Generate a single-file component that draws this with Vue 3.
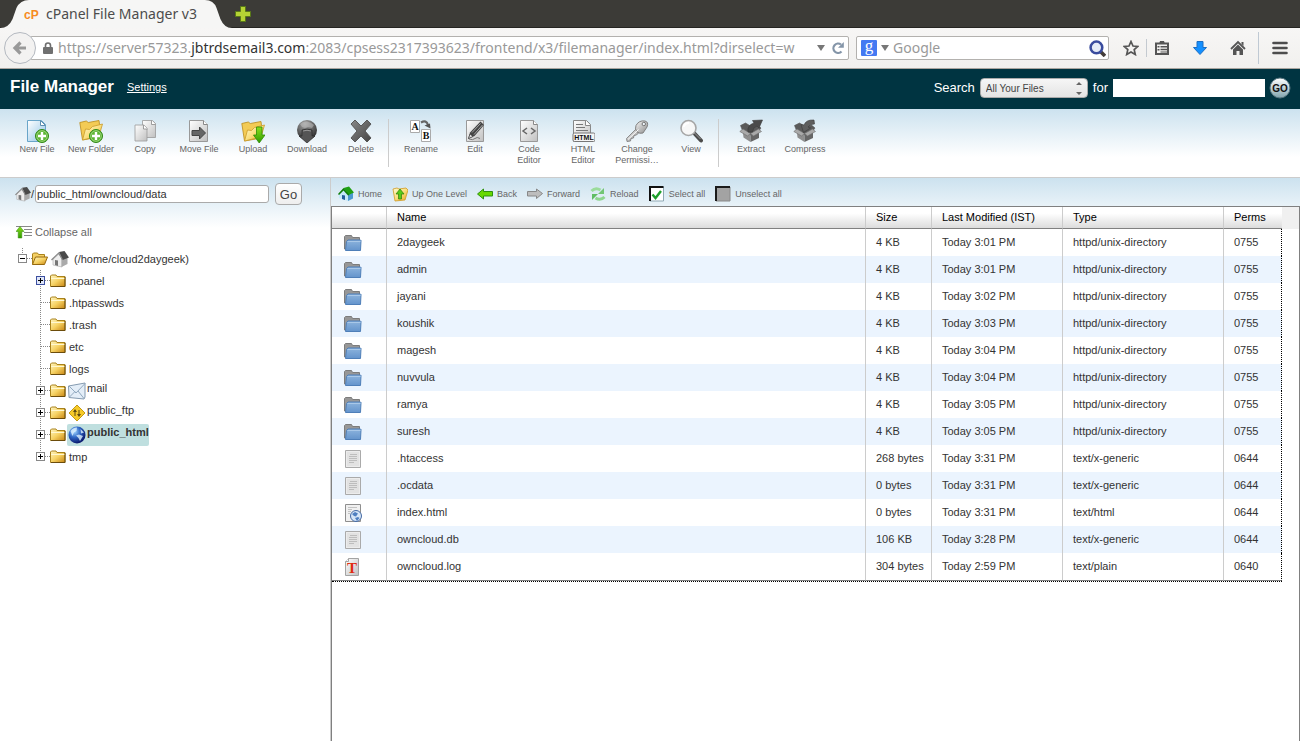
<script setup>
import { ref } from 'vue'

const address = ref('public_html/owncloud/data')
const scope = ref('All Your Files')
const query = ref('')
const webQuery = ref('')

const toolGroups = [
  [
    { icon: 'new-file', label: 'New File' },
    { icon: 'new-folder', label: 'New Folder' },
    { icon: 'copy', label: 'Copy' },
    { icon: 'move', label: 'Move File' },
    { icon: 'upload', label: 'Upload' },
    { icon: 'download', label: 'Download' },
    { icon: 'delete', label: 'Delete' }
  ],
  [
    {
      icon: 'rename',
      label: 'Rename',
      letters: [
        { text: 'A', x: 6, y: 11, kind: 'serif-glyph' },
        { text: 'B', x: 17, y: 20, kind: 'serif-glyph' }
      ]
    },
    { icon: 'edit', label: 'Edit' },
    { icon: 'code', label: 'Code\nEditor' },
    { icon: 'html', label: 'HTML\nEditor', letters: [{ text: 'HTML', x: 13, y: 21, kind: 'tag-glyph' }] },
    { icon: 'key', label: 'Change\nPermissi…' },
    { icon: 'view', label: 'View' }
  ],
  [
    { icon: 'extract', label: 'Extract' },
    { icon: 'compress', label: 'Compress' }
  ]
]

const actions = [
  { icon: 'home-green', label: 'Home' },
  { icon: 'up', label: 'Up One Level' },
  { icon: 'back', label: 'Back' },
  { icon: 'forward', label: 'Forward' },
  { icon: 'reload', label: 'Reload' },
  { icon: 'select', label: 'Select all' },
  { icon: 'unselect', label: 'Unselect all' }
]

const tree = [
  { name: '.cpanel', open: true, hot: true },
  { name: '.htpasswds' },
  { name: '.trash' },
  { name: 'etc' },
  { name: 'logs' },
  { name: 'mail', open: true, icon: 'mail' },
  { name: 'public_ftp', open: true, icon: 'ftp' },
  { name: 'public_html', open: true, icon: 'globe', selected: true },
  { name: 'tmp', open: true }
]

const dir = (name, time) => ({ icon: 'dir', name, size: '4 KB', time, type: 'httpd/unix-directory', perms: '0755' })
const files = [
  dir('2daygeek', 'Today 3:01 PM'),
  dir('admin', 'Today 3:01 PM'),
  dir('jayani', 'Today 3:02 PM'),
  dir('koushik', 'Today 3:03 PM'),
  dir('magesh', 'Today 3:04 PM'),
  dir('nuvvula', 'Today 3:04 PM'),
  dir('ramya', 'Today 3:05 PM'),
  dir('suresh', 'Today 3:05 PM'),
  { icon: 'text', name: '.htaccess', size: '268 bytes', time: 'Today 3:31 PM', type: 'text/x-generic', perms: '0644' },
  { icon: 'text', name: '.ocdata', size: '0 bytes', time: 'Today 3:31 PM', type: 'text/x-generic', perms: '0644' },
  { icon: 'web', name: 'index.html', size: '0 bytes', time: 'Today 3:31 PM', type: 'text/html', perms: '0644' },
  { icon: 'text', name: 'owncloud.db', size: '106 KB', time: 'Today 3:28 PM', type: 'text/x-generic', perms: '0644' },
  { icon: 'plain', letter: 'T', name: 'owncloud.log', size: '304 bytes', time: 'Today 2:59 PM', type: 'text/plain', perms: '0640' }
]
</script>

<template>
  <div class="window">
    <svg class="defs" aria-hidden="true">
      <defs>
        <linearGradient id="g-blue" x2="1" y2="1"><stop stop-color="#fff" /><stop offset="1" stop-color="#8fc3e6" /></linearGradient>
        <linearGradient id="g-page" x2="1" y2="1"><stop stop-color="#fff" /><stop offset="1" stop-color="#c0c0c0" /></linearGradient>
        <linearGradient id="g-gold" x2="1" y2="1"><stop stop-color="#fffbd5" /><stop offset=".5" stop-color="#fadf7e" /><stop offset="1" stop-color="#e3a41e" /></linearGradient>
        <linearGradient id="g-tree" x2="1" y2="1"><stop stop-color="#fff6c4" /><stop offset=".5" stop-color="#f6d263" /><stop offset="1" stop-color="#c88512" /></linearGradient>
        <linearGradient id="g-green" x2="0" y2="1"><stop stop-color="#8be01c" /><stop offset="1" stop-color="#2f9a00" /></linearGradient>
        <linearGradient id="g-dir" x2="0" y2="1"><stop stop-color="#8db4dd" /><stop offset="1" stop-color="#6494cc" /></linearGradient>
        <linearGradient id="g-dark" x2="1" y2="1"><stop stop-color="#888" /><stop offset="1" stop-color="#444" /></linearGradient>
        <linearGradient id="g-key" x2="1" y2="1"><stop stop-color="#f5f5f5" /><stop offset="1" stop-color="#8c8c8c" /></linearGradient>
        <radialGradient id="g-ball" cx=".4" cy=".2" r=".8"><stop stop-color="#a5a5a5" /><stop offset="1" stop-color="#2c2c2c" /></radialGradient>
        <radialGradient id="g-globe" cx=".35" cy=".3" r=".7"><stop stop-color="#9fd4ff" /><stop offset=".5" stop-color="#2e66c4" /><stop offset="1" stop-color="#0a1a70" /></radialGradient>
        <linearGradient id="g-go" x2="0" y2="1"><stop stop-color="#fff" /><stop offset="1" stop-color="#7fa3ad" /></linearGradient>
      </defs>

      <symbol id="i-new-file" viewBox="0 0 24 24">
        <path d="M2.500 1.500h14l4 4v17h-18z" fill="url(#g-blue)" stroke="#69a5c9" /><path d="M15.500 1.500v5h5z" fill="#fff" stroke="#5f8fb0" />
        <circle cx="17" cy="17" r="6.500" fill="#5cb533" stroke="#2f8714" /><circle cx="17" cy="17" r="5.300" fill="none" stroke="#b4e29b" stroke-width=".7" /><path d="M17 13v8M13 17h8" stroke="#fff" stroke-width="2.400" />
      </symbol>
      <symbol id="i-new-folder" viewBox="0 0 24 24">
        <path d="M.8 3.500l6.500-1.500 2 1.500L20 1.500l.5 4-3 13L3.500 21z" fill="#f3cb55" stroke="#b98a1a" stroke-width=".8" /><path d="M3.500 21l3-11 4 .5 3-3L23.500 5 20 17z" fill="url(#g-gold)" stroke="#c99a28" stroke-width=".8" />
        <circle cx="17" cy="17" r="6.500" fill="#5cb533" stroke="#2f8714" /><circle cx="17" cy="17" r="5.300" fill="none" stroke="#b4e29b" stroke-width=".7" /><path d="M17 13v8M13 17h8" stroke="#fff" stroke-width="2.400" />
      </symbol>
      <symbol id="i-copy" viewBox="0 0 24 24">
        <path d="M9.500 1.500h10l3 3v14h-13z" fill="url(#g-page)" stroke="#999" stroke-width=".8" /><path d="M18.500 1.500v4h4" fill="#fff" stroke="#888" stroke-width=".8" />
        <path d="M2 6h9l3 3v13H2z" fill="url(#g-page)" stroke="#999" stroke-width=".8" /><path d="M10.500 6v4h4" fill="#fff" stroke="#888" stroke-width=".8" />
      </symbol>
      <symbol id="i-move" viewBox="0 0 24 24">
        <path d="M2.500 1.500h14l4 4v17h-18z" fill="url(#g-page)" stroke="#999" /><path d="M16.500 1.500v4h4" fill="#fff" stroke="#888" />
        <path d="M5 11.500h7.500V8l6 6-6 6v-3.500H5z" fill="#666" stroke="#444" />
      </symbol>
      <symbol id="i-upload" viewBox="0 0 24 24">
        <path d="M.8 4.500l6.500-1.500 2 1.500L20 2.500l.5 4-3 13L3.500 22z" fill="#f3cb55" stroke="#b98a1a" stroke-width=".8" /><path d="M3.500 22l3-11 4 .5 3-3L23.500 6 20 18z" fill="url(#g-gold)" stroke="#c99a28" stroke-width=".8" />
        <path d="M15.500 8h5.500v8h3l-5.800 8-5.700-8h3z" fill="url(#g-green)" stroke="#2a8b06" stroke-width=".8" />
      </symbol>
      <symbol id="i-download" viewBox="0 0 24 24">
        <circle cx="12" cy="11" r="10" fill="url(#g-ball)" /><path d="M5 5q3-3 7-2.500T19 6l-2 3-4-1-3 1-3-1z" fill="#c4c4c4" opacity=".5" /><path d="M7 11q5-2 10 0v6h3l-8 7-8-7h3z" fill="#555" stroke="#2a2a2a" stroke-width=".7" /><path d="M8 12q4-1.500 8 0" fill="none" stroke="#999" />
      </symbol>
      <symbol id="i-delete" viewBox="0 0 24 24">
        <path d="M2 5l4-4 6 6 6-6 4 4-6 7 6 7-4 4-6-6-6 6-4-4 6-7z" fill="url(#g-dark)" stroke="#585858" />
      </symbol>
      <symbol id="i-rename" viewBox="0 0 24 24">
        <path d="M1.500 1.500h9v12h-9zM12.500 10.500h9v12h-9z" fill="#fff" stroke="#aaa" />
        <path d="M12 3.500q5.500-3 7 2.500" fill="none" stroke="#666" stroke-width="2.200" /><path d="M15.500 6.500l5.500-2 .5 5z" fill="#555" />
      </symbol>
      <symbol id="i-edit" viewBox="0 0 24 24">
        <path d="M3.500 1.500h17v21h-17z" fill="url(#g-page)" stroke="#999" /><path d="M6 20q4 1.500 6-.5t5 0" stroke="#777" fill="none" />
        <path d="M5 20l2-6.500L17.500 2.500l3.500 3.500-9.500 11z" fill="#444" /><path d="M9 13.500l8.500-9M11 15.500l8.500-9.500" stroke="#a8a8a8" /><path d="M5.500 19.500l1.500-4.500 3 2.500z" fill="#ddd" stroke="#333" stroke-width=".6" />
      </symbol>
      <symbol id="i-code" viewBox="0 0 24 24">
        <path d="M3.500 1.500h13l4 4v17h-17z" fill="url(#g-page)" stroke="#999" /><path d="M16.500 1.500v4h4" fill="#fff" stroke="#888" />
        <path d="M10 9l-4 3 4 3M14 9l4 3-4 3" fill="none" stroke="#666" stroke-width="1.500" />
      </symbol>
      <symbol id="i-html" viewBox="0 0 24 24">
        <path d="M2.500 1.500h13l4 4v17h-17z" fill="url(#g-page)" stroke="#888" /><path d="M14.500 1.500v5h5" fill="#fff" stroke="#888" />
        <path d="M5 5.500h7M5 8.500h9M5 11.500h12" stroke="#777" /><rect x="2" y="14" width="22" height="8.500" rx="1.500" fill="#f5f5f5" stroke="#777" />
      </symbol>
      <symbol id="i-key" viewBox="0 0 24 24">
        <path d="M12 9L1.500 19.500l.5 3 3.500-.5.500-2.500 2.500-.5.500-2.500 2.500-.5 4-4z" fill="url(#g-key)" stroke="#777" stroke-width=".8" /><path d="M11 6.500Q14 1 20 2q4 1 2 6l-4 6q-3 1-6-1-2.500-3-1-6.500z" fill="url(#g-key)" stroke="#808080" /><circle cx="18.800" cy="5" r="1.700" fill="#eef5fa" stroke="#777" /><path d="M3 20.500l10.500-10" stroke="#fff" />
      </symbol>
      <symbol id="i-view" viewBox="0 0 24 24">
        <path d="M15 14l7 7.500" stroke="#4c4c4c" stroke-width="4" stroke-linecap="round" /><path d="M15.500 14l6 6" stroke="#999" /><circle cx="9.500" cy="9" r="7.500" fill="#f7f7f7" stroke="#a5a5a5" stroke-width="1.600" /><path d="M4.500 8q1.500-4 5.500-4" stroke="#fff" stroke-width="2" fill="none" />
      </symbol>
      <symbol id="i-box" viewBox="0 0 24 24">
        <path d="M1.500 6.500l5-2.500 5 3 7-1 3.500 3-3 4-7.500 3-8-4.500z" fill="#5a5a5a" stroke="#555" stroke-width=".6" />
        <path d="M3.500 11l8 4.500V23l-7-4.500z" fill="#8e8e8e" /><path d="M11.500 15.500l8.500-4v7.500l-8.500 4z" fill="#666" />
        <path d="M.8 12.500L4 10l7.500 4.500-3 2.500zM11.500 14.500L19.500 10l3 2.500-8 4.500z" fill="#a9a9a9" stroke="#6d6d6d" stroke-width=".6" />
      </symbol>
      <symbol id="i-extract" viewBox="0 0 24 24">
        <use href="#i-box" /><path d="M9 13q-1-7 6-9l-1.500-2.500L23.500 1l-3.500 8-2-2q-4 1-4.500 6z" fill="#4b4b4b" stroke="#3a3a3a" stroke-width=".6" />
      </symbol>
      <symbol id="i-compress" viewBox="0 0 24 24">
        <use href="#i-box" /><path d="M21 1q-8-.5-10 5L8 5.500l2.500 8 7-4.500-2.500-1q1.500-3 6.500-3z" fill="#5e5e5e" stroke="#3a3a3a" stroke-width=".6" />
      </symbol>

      <symbol id="i-home-green" viewBox="0 0 16 16">
        <path d="M1 8l4.500-4L10 8.500V15l-9-3z" fill="#c4e8f8" /><path d="M10 8.500l5-2v6L10 15z" fill="#4a9ad0" /><path d="M5.500 2L11 .5 16 6.500 10.500 9z" fill="#1fa012" /><path d="M0 8l5.500-6 6 7-1.500.5-4.500-5L1 9z" fill="#0d7c08" /><path d="M4 9l3 .5V14l-3-1z" fill="#225d98" />
      </symbol>
      <symbol id="i-up" viewBox="0 0 16 16">
        <path d="M1 3l4-1 2 1 7-1 2 2-3 10-10 1z" fill="url(#g-gold)" stroke="#d09b22" stroke-width=".8" /><path d="M8 3l4 5H9.500v5h-3V8H4z" fill="#58cc17" stroke="#2d7c07" stroke-width=".7" />
      </symbol>
      <symbol id="i-back" viewBox="0 0 16 16"><path d="M.5 8l6-5v2.500h9v4.500h-9v3z" fill="#67d900" stroke="#2e9110" /></symbol>
      <symbol id="i-forward" viewBox="0 0 16 16"><path d="M15.500 7.500L9.500 3v2.500h-9V10h9v2.500z" fill="#bdbdbd" stroke="#888" /></symbol>
      <symbol id="i-reload" viewBox="0 0 16 16">
        <path d="M1.500 5q4-4 9-1" fill="none" stroke="#9bdc9b" stroke-width="3" /><path d="M14 2v6H8z" fill="#72c674" /><path d="M14.500 11q-4 4-9 1" fill="none" stroke="#8ed68e" stroke-width="3" /><path d="M2 14V8h6z" fill="#5fbd63" />
      </symbol>
      <symbol id="i-select" viewBox="0 0 16 16"><path d="M1 1h13.500v14H1z" fill="#fff" stroke="#8fa9b5" /><path d="M1 15V1h13.500" fill="none" stroke="#111" stroke-width="2" /><path d="M3.500 8.500l3 3.500L12 5" fill="none" stroke="#1fa02c" stroke-width="2.400" /></symbol>
      <symbol id="i-unselect" viewBox="0 0 16 16"><path d="M1 1h14v14H1z" fill="#a3a3a3" stroke="#888" /><path d="M1 15V1h14" fill="none" stroke="#1b1b1b" stroke-width="2" /></symbol>

      <symbol id="i-house" viewBox="0 0 18 18">
        <path d="M2 9l6-5 3 5v8l-9-2z" fill="#eee" stroke="#aaa" stroke-width=".6" /><path d="M10.500 9l6-2v7l-6 3z" fill="#aaa" /><path d="M8 2l5.500-1L18 7.500 11.500 10z" fill="#4a4a4a" /><path d="M0 9.500L8 2l4 7.500-1 .5-3.500-6L1 10.500z" fill="#8a8a8a" /><path d="M4 10l3 .5V16l-3-1z" fill="#777" />
      </symbol>
      <symbol id="i-folder" viewBox="0 0 16 16">
        <path d="M.5 13.500V3l1-1h4.500l1 1.500h8v10z" fill="url(#g-tree)" stroke="#a9821c" /><path d="M1 5.500h14" stroke="#fff8d0" /><path d="M15 4v9.500H1" fill="none" stroke="#6b4c0c" />
      </symbol>
      <symbol id="i-folder-open" viewBox="0 0 16 16">
        <path d="M.5 13.500V3l1-1h4l1 1.500h6v3" fill="#f4d065" stroke="#a9821c" /><path d="M.5 13.500l3-7.500h12l-3 7.500z" fill="url(#g-tree)" stroke="#96690e" />
      </symbol>
      <symbol id="i-collapse" viewBox="0 0 16 14">
        <path d="M0 1.500h16M8 4.500h8M8 7.500h8M8 10.500h8" stroke="#888" /><path d="M4 1.500l4 5H5.800V13H2.200V6.500H0z" fill="url(#g-green)" stroke="#338c0b" stroke-width=".5" />
      </symbol>
      <symbol id="i-mail" viewBox="0 0 18 18"><path d="M.5 4L17 1v14l-1 2L1 15.500z" fill="#e4eef8" stroke="#849ab0" /><path d="M1 4l7 7 9-9.500M1.500 15L7 9.500M16 16.500L10 9" fill="none" stroke="#91a9bf" /></symbol>
      <symbol id="i-ftp" viewBox="0 0 18 18"><path d="M9 1l8 8-8 8-8-8z" fill="#f6ca28" stroke="#c39a15" /><path d="M7 12V6M11 6v6" stroke="#5d4a10" /><path d="M5 8l2-3 2 3zM9 10l2 3 2-3z" fill="#5d4a10" /></symbol>
      <symbol id="i-globe" viewBox="0 0 18 18"><circle cx="9" cy="9" r="8.500" fill="url(#g-globe)" /><path d="M2.500 5Q5 1.500 9 1.500L8.500 5 6 6.500 4.500 10zM8 9.500l3-1 4 1.500-3 5-1.500-3zM12.500 3L16 6.500l-3 1z" fill="#e0f3ff" opacity=".8" /></symbol>

      <symbol id="i-dir" viewBox="0 0 18 18"><path d="M.5 15V2.500l1-1h6l1 2h7V15z" fill="#979797" stroke="#7c7c7c" /><path d="M1.500 16.500l1-9L4 6h12.500l.5.500-.5 10z" fill="url(#g-dir)" stroke="#4f7fb8" /><path d="M3.500 7.500h13" stroke="#a9c8e8" /></symbol>
      <symbol id="i-text" viewBox="0 0 18 18"><path d="M1.500.5h15v17h-15z" fill="#ececec" stroke="#aaa" /><path d="M3 2h12v14H3z" fill="#e2e2e2" /><path d="M6 4.500h7M5 6.500h8M5 8.500h8M5 10.500h8M5 12.500h5" stroke="#bdbdbd" /></symbol>
      <symbol id="i-web" viewBox="0 0 18 18"><path d="M1.500.5h15v17h-15z" fill="#f0f0f0" stroke="#8e8e8e" /><path d="M4 3.500h9M4 5.500h4M4 7.500h3M4 9.500h2" stroke="#c3c3c3" /><circle cx="12" cy="12" r="5.500" fill="#d5e5f7" stroke="#456ba5" /><path d="M8 10l3-2 3 1.500-2 3-2-.5zM11 14l3-1 1.500 1-2.500 3z" fill="#4f7fc0" /></symbol>
      <symbol id="i-plain" viewBox="0 0 18 18"><path d="M4.500.5h10v17h-13v-14z" fill="url(#g-page)" stroke="#a3a3a3" /><path d="M4.500.5v3h-3" fill="#fff" stroke="#a3a3a3" /></symbol>
    </svg>

    <header class="chrome">
      <div class="tabstrip">
        <div class="tab">
          <svg class="tab-shape" viewBox="0 0 240 28" preserveAspectRatio="none" aria-hidden="true"><path d="M0 28Q9 28 13 19L17 8Q21 0 30 0H212Q221 0 224 8L228 19Q232 28 240 28z" fill="#f6f6f5" /></svg>
          <svg class="favicon" viewBox="0 0 16 16" role="img" aria-label="cPanel"><text x="0" y="13" class="cp-glyph">cP</text></svg>
          <span>cPanel File Manager v3</span>
        </div>
        <button class="plain add" aria-label="New tab"><svg viewBox="0 0 16 16"><path d="M5.500.5h5v5h5v5h-5v5h-5v-5h-5v-5h5z" fill="#b5d334" stroke="#587818" /></svg></button>
      </div>
      <nav class="navbar" aria-label="Browser">
        <button class="round" aria-label="Go back"><svg viewBox="0 0 16 16"><path d="M8.500 2.500L3 8l5.500 5.500M3 8h11" fill="none" stroke="#999" stroke-width="3.200" /></svg></button>
        <div class="field url">
          <svg class="lock" viewBox="0 0 10 12"><path d="M2.500 6V3.500q0-2.500 2.500-2.500t2.500 2.500V6" fill="none" stroke="#6e6e6e" stroke-width="1.600" /><rect y="5" width="10" height="7" rx="1" fill="#707070" /></svg>
          <span class="address">https://server57323.<b>jbtrdsemail3.com</b>:2083/cpsess2317393623/frontend/x3/filemanager/index.html?dirselect=w</span>
          <svg class="caret" viewBox="0 0 8 6"><path d="M0 0h8L4 6z" fill="#777" /></svg>
          <svg class="refresh" viewBox="0 0 12 12"><path d="M9.500 9.500A4.700 4.700 0 1 1 9 2.500" fill="none" stroke="#8495a8" stroke-width="2.200" /><path d="M11.800 0v5.800H6z" fill="#8495a8" /></svg>
        </div>
        <div class="field web">
          <svg class="google" viewBox="0 0 16 16"><rect width="16" height="16" rx="1" fill="#4479f2" /><text x="8" y="11" class="g-glyph">g</text></svg>
          <svg class="caret" viewBox="0 0 8 6"><path d="M0 0h8L4 6z" fill="#777" /></svg>
          <input v-model="webQuery" type="text" placeholder="Google" aria-label="Search with Google">
          <svg class="lens" viewBox="0 0 16 16"><path d="M11 11l4 4" stroke="#443d3a" stroke-width="3.400" /><circle cx="7" cy="7" r="5.500" fill="#e6ecf7" stroke="#3a4c9e" stroke-width="2.400" /></svg>
        </div>
        <div class="chrome-tools">
          <button class="plain" aria-label="Bookmark"><svg viewBox="0 0 16 16"><path d="M8 1.500l2 4.500 4.800.4-3.600 3.200 1.100 4.900L8 12l-4.300 2.500 1.100-4.900L1.200 6.400 6 6z" fill="none" stroke="#555" stroke-width="1.700" /></svg></button>
          <i class="short-rule"></i>
          <button class="plain" aria-label="Bookmarks list"><svg viewBox="0 0 16 16"><path d="M2 3.500h12v10.500H2z" fill="none" stroke="#555" stroke-width="2" /><path d="M5 4l1-3h4l1 3zM3.500 6h2v1.500h-2zM3.500 9h2v1.500h-2zM6.500 6H13v1.500H6.500zM6.500 8.800H13v1.400H6.500zM6.500 11.500H13v1H6.500z" fill="#555" /></svg></button>
          <button class="plain" aria-label="Downloads"><svg viewBox="0 0 16 16"><path d="M5 1.500h6v6h3.500L8 14.500 1.500 7.500H5z" fill="#1490ff" stroke="#1c6fc4" /></svg></button>
          <button class="plain" aria-label="Home page"><svg viewBox="0 0 16 16"><path d="M1 9l7-7 7 7" fill="none" stroke="#555" stroke-width="1.800" /><path d="M3 9.500l5-5 5 5V15H9.500v-4h-3v4H3zM11.500 2h2v4l-2-2z" fill="#555" /></svg></button>
          <i class="tall-rule"></i>
          <button class="plain" aria-label="Menu"><svg viewBox="0 0 16 16"><path d="M1.500 3h13M1.500 8h13M1.500 13h13" stroke="#4d4d4d" stroke-width="2.600" stroke-linecap="round" /></svg></button>
        </div>
      </nav>
    </header>

    <div class="banner">
      <h1>File Manager</h1>
      <a href="#settings">Settings</a>
      <form class="search" @submit.prevent>
        <label for="scope">Search</label>
        <span class="picker">
          <select id="scope" v-model="scope"><option>All Your Files</option></select>
          <svg viewBox="0 0 6 13"><path d="M0 3l3-3 3 3zM0 10h6l-3 3z" fill="#666" /></svg>
        </span>
        <label for="query">for</label>
        <input id="query" v-model="query" type="text">
        <button class="plain go-ball" aria-label="Go"><svg viewBox="0 0 22 22"><circle cx="11" cy="11" r="10" fill="url(#g-go)" stroke="#56757f" /><text x="11" y="15" class="go-glyph">GO</text></svg></button>
      </form>
    </div>

    <div class="toolbar" role="toolbar" aria-label="File operations">
      <div v-for="(group, i) in toolGroups" :key="i" class="group">
        <button v-for="tool in group" :key="tool.label" class="plain tool">
          <svg viewBox="0 0 24 24">
            <use :href="'#i-' + tool.icon" />
            <text v-for="letter in tool.letters" :key="letter.text" :x="letter.x" :y="letter.y" :class="letter.kind">{{ letter.text }}</text>
          </svg>
          <span>{{ tool.label }}</span>
        </button>
      </div>
    </div>

    <div class="body">
      <aside class="sidebar">
        <form class="path" @submit.prevent>
          <svg class="mini-house"><use href="#i-house" /></svg>
          <label for="path">/</label>
          <input id="path" v-model="address" type="text">
          <button>Go</button>
        </form>
        <button class="plain collapse"><svg><use href="#i-collapse" /></svg>Collapse all</button>
        <ul class="tree">
          <li>
            <div class="node">
              <span class="twig root"><button class="box" aria-label="Collapse home"><svg viewBox="0 0 7 7"><path d="M1 3.500h5" stroke="#000" /></svg></button></span>
              <svg class="folder"><use href="#i-folder-open" /></svg>
              <a href="#home" class="root-link"><svg><use href="#i-house" /></svg><span>(/home/cloud2daygeek)</span></a>
            </div>
            <ul>
              <li v-for="item in tree" :key="item.name" class="node">
                <span class="twig"><button v-if="item.open" :class="['box', { hot: item.hot }]" :aria-label="'Expand ' + item.name"><svg viewBox="0 0 7 7"><path d="M1 3.500h5M3.500 1v5" stroke="#000" /></svg></button></span>
                <svg class="folder"><use href="#i-folder" /></svg>
                <a :href="'#' + item.name" :class="{ selected: item.selected, special: item.icon }">
                  <svg v-if="item.icon"><use :href="'#i-' + item.icon" /></svg><span>{{ item.name }}</span>
                </a>
              </li>
            </ul>
          </li>
        </ul>
      </aside>

      <main class="main">
        <div class="actions">
          <button v-for="action in actions" :key="action.label" class="plain action"><svg><use :href="'#i-' + action.icon" /></svg>{{ action.label }}</button>
        </div>
        <div class="pane">
          <table>
            <colgroup><col class="c-icon"><col><col class="c-size"><col class="c-time"><col class="c-type"><col class="c-perms"></colgroup>
            <thead>
              <tr><th></th><th>Name</th><th>Size</th><th>Last Modified (IST)</th><th>Type</th><th>Perms</th></tr>
            </thead>
            <tbody>
              <tr v-for="file in files" :key="file.name">
                <td><svg viewBox="0 0 18 18"><use :href="'#i-' + file.icon" /><text v-if="file.letter" x="8" y="15" class="t-glyph">{{ file.letter }}</text></svg></td>
                <td>{{ file.name }}</td>
                <td>{{ file.size }}</td>
                <td>{{ file.time }}</td>
                <td>{{ file.type }}</td>
                <td>{{ file.perms }}</td>
              </tr>
            </tbody>
          </table>
        </div>
      </main>
    </div>
  </div>
</template>

<style>
body { background: #fff; }
</style>

<style scoped>
* { box-sizing: border-box; }
.window { min-height: 100vh; display: flex; flex-direction: column; font: 11px/13px "Liberation Sans", Arial, sans-serif; color: #333; }
.defs { position: absolute; width: 0; height: 0; }
svg { display: block; flex: none; }
button, input, select { font-family: inherit; }
.plain { border: 0; padding: 0; background: none; color: inherit; font-size: inherit; line-height: inherit; }
ul { list-style: none; margin: 0; padding: 0; }
.serif-glyph { font: bold 10px "Liberation Serif", serif; fill: #111; text-anchor: middle; }
.tag-glyph { font: bold 7px "Liberation Sans", sans-serif; fill: #111; text-anchor: middle; }
.t-glyph { font: bold 15px "Liberation Serif", serif; fill: #e02b12; text-anchor: middle; }
.g-glyph { font: 17px "Liberation Serif", serif; fill: #fff; text-anchor: middle; }
.go-glyph { font: bold 10px "Liberation Sans", sans-serif; fill: #111; text-anchor: middle; }
.cp-glyph { font: bold 12px "Liberation Sans", sans-serif; fill: #f68b1f; }

.chrome { font: 14px/20px "Noto Sans", sans-serif; }
.tabstrip { height: 28px; display: flex; align-items: center; background: #3c3b37; border-bottom: 1px solid #262522; }
.tab { position: relative; width: 232px; height: 28px; display: flex; align-items: center; gap: 6px; padding-left: 24px; color: #4c4c4c; }
.tab-shape { position: absolute; left: 0; top: 0; width: 100%; height: 100%; }
.tab span, .favicon { position: relative; }
.favicon { width: 16px; height: 16px; }
.add { margin-left: 3px; }
.add svg { width: 16px; height: 16px; }
.navbar { height: 41px; display: flex; align-items: center; padding: 0 12px 0 4px; background: linear-gradient(#f7f6f5, #f1f0ee); border-bottom: 1px solid #aaa59f; }
.round { position: relative; width: 32px; height: 32px; margin-right: -6px; padding: 0 0 0 7px; border: 1px solid #b4b9c0; border-radius: 50%; background: #f3f2f1; }
.round svg { width: 16px; height: 16px; }
.field { height: 24px; display: flex; align-items: center; background: #fff; border: 1px solid #b3b1ae; border-radius: 2px; }
.url { flex: 1; min-width: 0; padding: 0 4px 0 12px; color: #999; }
.lock { width: 10px; height: 12px; margin-right: 5px; }
.address { flex: 1; overflow: hidden; white-space: nowrap; }
.address b { font-weight: 400; color: #333; }
.caret { width: 8px; height: 6px; margin: 0 7px; }
.refresh { width: 12px; height: 12px; }
.web { width: 253px; margin-left: 7px; padding: 0 2px 0 4px; }
.google { width: 16px; height: 16px; }
.web .caret { margin: 0 4px; }
.web input { flex: 1; min-width: 0; border: 0; padding: 0; background: none; font: inherit; color: #333; }
.web input::placeholder { color: #999; opacity: 1; }
.lens { width: 17px; height: 17px; }
.chrome-tools { display: flex; align-items: center; margin-left: 14px; }
.chrome-tools svg { width: 16px; height: 16px; }
.short-rule { width: 1px; height: 18px; margin: 0 7px; background: #c4cad0; }
.tall-rule { width: 1px; height: 32px; margin: 0 13px 0 12px; background: #bfc9d3; }
.short-rule ~ .plain + .plain { margin-left: 22px; }

.banner { height: 40px; display: flex; align-items: center; padding: 0 9px 4px 10px; background: #003441; color: #fff; }
h1 { margin: 0 13px 0 0; font-size: 17px; line-height: 20px; }
.banner a { color: #fff; }
.search { display: flex; align-items: center; gap: 5px; margin: 2px 0 0 auto; font-size: 13px; line-height: 16px; }
.picker { position: relative; }
.picker select { display: block; width: 108px; height: 20px; padding: 0 5px; appearance: none; border: 1px solid #aaa; border-radius: 4px; background: linear-gradient(#f6f6f6, #e4e4e4); font-size: 10px; color: #444; }
.picker svg { position: absolute; right: 6px; top: 4px; width: 6px; height: 13px; }
.search input { width: 152px; height: 18px; padding: 1px 3px; border: 0; background: #fff; }
.search .go-ball { margin-left: -1px; }
.go-ball svg { width: 22px; height: 22px; }

.toolbar { height: 69px; display: flex; padding: 10px 10px 0; background: linear-gradient(#cce2ef, #fff 48px); border-bottom: 1px solid #ccc; }
.group { display: flex; height: 48px; }
.group + .group { border-left: 1px solid #ccc; padding-left: 5px; }
.tool { width: 54px; display: flex; flex-direction: column; align-items: center; gap: 1px; color: #666; font-size: 9px; line-height: 11px; white-space: pre-line; }
.tool svg { width: 24px; height: 24px; }

.body { flex: 1; display: flex; }
.sidebar { width: 330px; flex: none; background: linear-gradient(#cce2ef, #fff 50px); }
.path { display: flex; align-items: center; padding: 5px 0 0 15px; }
.mini-house { width: 16px; height: 16px; }
.path label { width: 4px; }
.path input { width: 234px; height: 18px; padding: 0 1px; border: 1px solid #aaa; border-radius: 3px; background: #fff; font-size: 11px; color: #333; }
.path button { width: 27px; height: 22px; margin-left: 6px; padding: 0; border: 1px solid #aaa; border-radius: 4px; background: linear-gradient(#fff, #eee); font-size: 13px; color: #444; }
.collapse { display: flex; align-items: center; gap: 3px; margin: 20px 0 9px 16px; color: #666; }
.collapse svg { width: 16px; height: 14px; }
.tree { padding-left: 16px; }
.tree ul { padding-left: 18px; }
.node { display: flex; align-items: center; height: 22px; }
.twig { width: 16px; height: 22px; display: flex; align-items: center; padding-left: 2px; background: repeating-linear-gradient(#888 0 1px, transparent 1px 2px) 6px 0 / 1px 100% no-repeat, repeating-linear-gradient(90deg, #888 0 1px, transparent 1px 2px) 7px 10px / 9px 1px no-repeat; }
.node:last-child > .twig, .twig.root { background-size: 1px 11px, 9px 1px; }
.box { width: 9px; height: 9px; margin-bottom: 1px; padding: 0; border: 1px solid #888; background: #fff; }
.box svg { width: 7px; height: 7px; }
.box.hot { border-color: #3c4fa0; background: #dfe6f8; }
.folder { width: 16px; height: 16px; }
.node a { height: 22px; display: flex; align-items: center; margin-left: 1px; padding-left: 2px; color: #333; text-decoration: none; border-radius: 2px; }
.node a svg { width: 18px; height: 18px; }
.node a.special { gap: 1px; padding-left: 1px; }
.node a.special span { padding-bottom: 6px; }
.node a.selected { background: #bfdfdf; font-weight: 700; }
.node .root-link { gap: 5px; }

.main { flex: 1; min-width: 0; display: flex; flex-direction: column; border-left: 1px solid #ccc; background: linear-gradient(#cce2ef, #fff 50px); }
.actions { height: 28px; display: flex; gap: 10px; align-items: center; padding: 4px 0 0 7px; font-size: 9px; color: #666; }
.action { display: flex; align-items: center; gap: 4px; }
.action svg { width: 16px; height: 16px; }
.pane { flex: 1; padding-right: 17px; border: 1px solid #808080; border-bottom: 0; background: linear-gradient(#f0f0f0, #f0f0f0) 0 0 / 100% 22px no-repeat #fff; }
table { width: 100%; table-layout: fixed; border-collapse: separate; border-spacing: 0; border-bottom: 1px dotted #000; }
.c-icon { width: 55px; }
.c-size { width: 66px; }
.c-time { width: 131px; }
.c-type { width: 161px; }
.c-perms { width: 58px; }
th, td { padding: 0 0 0 10px; text-align: left; white-space: nowrap; border-right: 1px solid #ccc; }
th { height: 22px; font-weight: 400; color: #000; background: linear-gradient(#fff, #fff 30%, #dcdcdc); border-bottom: 1px solid #808080; }
th:last-child { border-right: 0; }
td { height: 27px; }
td svg { width: 18px; height: 18px; margin: 1px 0 0 2px; }
td:last-child { border-right: 1px dotted #000; }
tbody tr:nth-child(even) { background: #ebf4fe; }
tbody tr:last-child td { height: 28px; border-bottom: 1px solid #808080; }
</style>
